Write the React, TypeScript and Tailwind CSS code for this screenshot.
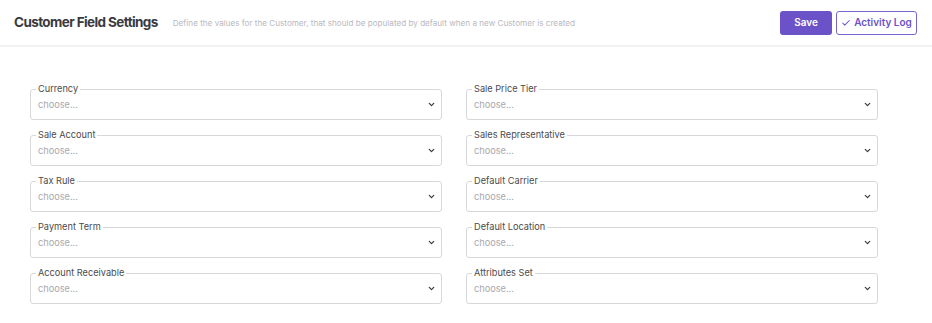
import React from "react";
import { ChevronDown, Check } from "lucide-react";

const left = ["Currency", "Sale Account", "Tax Rule", "Payment Term", "Account Receivable"];
const right = ["Sale Price Tier", "Sales Representative", "Default Carrier", "Default Location", "Attributes Set"];

function Field({ label }: { label: string }) {
  return (
    <div className="relative mt-[6px] h-[31px] rounded-[3px] border border-[#d8d8dc] flex items-center pl-[7px] pr-[5px]">
      <span className="absolute -top-[7px] left-[5px] bg-white px-[2px] text-[9.2px] leading-[12px] text-[#4b4b4b]">
        {label}
      </span>
      <span className="flex-1 text-[9.2px] text-[#a9a9ae] pt-[1px]">choose...</span>
      <ChevronDown size={9} strokeWidth={3.2} className="text-[#3a3a3a]" />
    </div>
  );
}

export default function App() {
  return (
    <div className="w-[932px] h-[323px] bg-white" style={{ fontFamily: "Inter, 'Noto Sans', sans-serif" }}>
      <div className="h-[47px] flex items-center pl-[14px] pr-[15px] border-b-[2px] border-[#f2f2f4]">
        <h1 className="text-[13.5px] font-bold text-[#3a3a3f] tracking-[-0.6px]">Customer Field Settings</h1>
        <p className="ml-[15px] text-[8.15px] text-[#b9b9c0] pt-[2px]">
          Define the values for the Customer, that should be populated by default when a new Customer is created
        </p>
        <div className="ml-auto flex items-center gap-[4px]">
          <button className="h-[24px] w-[52px] rounded-[3px] bg-[#6b52c9] text-white text-[10px] font-semibold">Save</button>
          <button className="h-[24px] w-[81px] rounded-[3px] border border-[#7a65cf] bg-white text-[#6b52c9] text-[10px] font-semibold flex items-center justify-center gap-[3px]">
            <Check size={10} strokeWidth={2.5} />
            Activity Log
          </button>
        </div>
      </div>
      <div className="pt-[36px] pl-[30px] grid grid-cols-[412px_412px] gap-x-[24px]">
        <div className="flex flex-col gap-[9px]">
          {left.map((l) => (
            <Field key={l} label={l} />
          ))}
        </div>
        <div className="flex flex-col gap-[9px]">
          {right.map((l) => (
            <Field key={l} label={l} />
          ))}
        </div>
      </div>
    </div>
  );
}
